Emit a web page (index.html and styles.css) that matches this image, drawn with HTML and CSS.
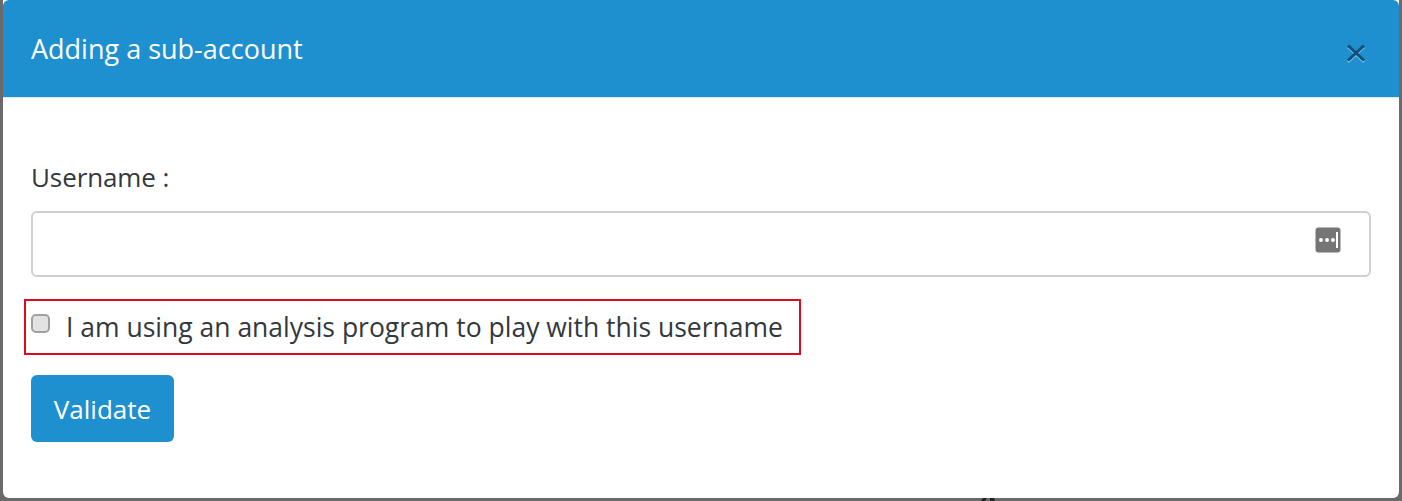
FILE: index.html
```html
<!DOCTYPE html>
<html lang="en">
<head>
<meta charset="utf-8">
<title>Adding a sub-account</title>
<link rel="stylesheet" href="styles.css">
</head>
<body>
<div class="modal">
  <header class="modal-header">
    <h2 class="modal-title">Adding a sub-account</h2>
    <button class="close" type="button" aria-label="Close">
      <svg class="close-icon" width="20" height="20" viewBox="0 0 20 20"><path class="close-shadow" d="M2 4 L18 19 M18 4 L2 19"/><path class="close-stroke" d="M2 2.500 L18 17.500 M18 2.500 L2 17.500"/></svg>
    </button>
  </header>
  <form class="modal-body">
    <label class="field-label" for="username">Username :</label>
    <div class="input-wrap">
      <input class="text-input" id="username" type="text">
      <svg class="key-icon" width="26" height="26" viewBox="0 0 26 26"><rect x="0.500" y="0.500" width="25" height="25" rx="3" fill="#757575"/><circle cx="6" cy="13" r="2" fill="#fff"/><circle cx="12" cy="13" r="2" fill="#fff"/><circle cx="18" cy="13" r="2" fill="#fff"/><rect x="21" y="5" width="2" height="16" fill="#fff"/></svg>
    </div>
    <div class="check-row">
      <input class="check" id="analysis" type="checkbox">
      <label class="check-label" for="analysis">I am using an analysis program to play with this username</label>
    </div>
    <button class="submit" type="button">Validate</button>
  </form>
</div>
<svg class="backdrop-mark" width="16" height="3" viewBox="0 0 16 3"><path d="M1 3 L3 0 H7 L5 3 Z M10 3 L10 0 H14 L15 3 Z" fill="#222"/></svg>
</body>
</html>
```
FILE: styles.css
```css
html, body {
  margin: 0;
  height: 501px;
  overflow: hidden;
  background: #6a6a6a;
}
body {
  position: relative;
  padding: 0 3px 3px 3px;
  box-sizing: border-box;
  font-family: "Open Sans", "Noto Sans", sans-serif;
  color: #33383c;
}
.modal {
  height: 498px;
  background: #fff;
  border-radius: 0 0 6px 6px;
  overflow: hidden;
}
.modal-header {
  height: 98px;
  box-sizing: border-box;
  background: #1e90d0;
  display: flex;
  align-items: flex-start;
  justify-content: space-between;
  padding: 31px 33px 0 28px;
  border-bottom: 1px solid #d8ecf8;
  border-radius: 6px 6px 0 0;
}
.modal-title {
  margin: 0;
  font-size: 27px;
  font-weight: 400;
  line-height: 36px;
  color: #fff;
}
.close {
  border: 0;
  padding: 0;
  margin-top: 12px;
  background: none;
  display: flex;
}
.close-icon { display: block; fill: none; }
.close-shadow { stroke: #7cc0ea; stroke-width: 2.500; }
.close-stroke { stroke: #114f78; stroke-width: 3; }
.modal-body {
  padding: 59px 28px 0;
  display: flex;
  flex-direction: column;
  align-items: flex-start;
}
.field-label {
  font-size: 26px;
  letter-spacing: -0.1px;
  line-height: 40px;
}
.input-wrap {
  position: relative;
  align-self: stretch;
  margin-top: 14px;
}
.text-input {
  display: block;
  width: 100%;
  height: 66px;
  box-sizing: border-box;
  border: 2px solid #d0d0d0;
  border-radius: 6px;
  background: #fff;
}
.key-icon {
  position: absolute;
  right: 30px;
  top: 16px;
}
.check-row {
  display: flex;
  align-items: flex-start;
  gap: 16px;
  margin-top: 22px;
  margin-left: -7px;
  padding: 8px 16px 5px 5px;
  border: 2px solid #dc0a22;
  height: 56px;
  box-sizing: border-box;
  white-space: nowrap;
}
.check {
  appearance: none;
  width: 19px;
  height: 19px;
  margin: 5px 0 0;
  box-sizing: border-box;
  background: #e2e2e2;
  border: 2px solid #a0a0a0;
  border-radius: 5px;
}
.check-label {
  font-size: 26.500px;
  line-height: 36px;
}
.submit {
  margin-top: 20px;
  width: 143px;
  height: 67px;
  border: 0;
  border-radius: 6px;
  background: #1e90d0;
  color: #fff;
  font: inherit;
  font-size: 26px;
}
.backdrop-mark {
  position: absolute;
  left: 980px;
  top: 498px;
}
```
